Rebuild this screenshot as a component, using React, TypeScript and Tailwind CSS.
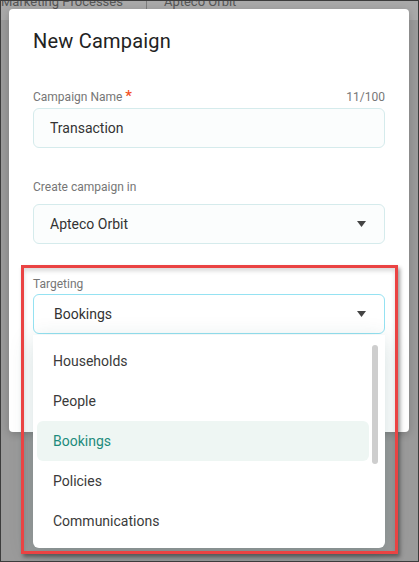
import React from 'react';

const targets = ['Households', 'People', 'Bookings', 'Policies', 'Communications'];

function Caret() {
    return (
        <svg width="9" height="6" viewBox="0 0 9 6" className="shrink-0">
            <path d="M0 0 L9 0 L4.5 6 Z" fill="#444" />
        </svg>
    );
}

function Field({ label, children, gap, extra }: { label: React.ReactNode; children: React.ReactNode; gap: string; extra?: React.ReactNode }) {
    return (
        <div>
            <div className={`flex items-center justify-between text-[12px] leading-4 text-[#767676] ${gap}`}>
                <span>{label}</span>
                {extra}
            </div>
            {children}
        </div>
    );
}

export default function App() {
    const selected = 'Bookings';

    return (
        <div className="relative w-[419px] h-[562px] overflow-hidden bg-[#9a9a9a] font-['Roboto',sans-serif]">
            {/* app header behind the modal */}
            <div className="h-[20px] bg-[#a9a9a9] flex items-start text-[13px] text-[#555] leading-none">
                <span className="-mt-[5px] ml-[1px]">Marketing Processes</span>
                <span className="ml-[23px] w-px h-[9px] bg-[#7d7d7d]" />
                <span className="-mt-[5px] ml-[17px]">Apteco Orbit</span>
            </div>

            {/* modal */}
            <div className="absolute left-[9px] top-[9px] w-[400px] h-[423px] rounded bg-white px-6 pt-[18px] shadow-[0_2px_8px_rgba(0,0,0,0.2)]">
                <h1 className="text-[20px] leading-7 text-[#222] tracking-[0.2px]">New Campaign</h1>

                <div className="mt-[34px]">
                    <Field
                        gap="mb-[3px]"
                        label={<>Campaign Name <span className="text-[#f4511e] text-[15px] font-medium leading-none">*</span></>}
                        extra={<span className="text-[#777]">11/100</span>}
                    >
                        <div className="h-[40px] rounded-md border border-[#d5ebec] bg-[#fbfdfd] flex items-center px-4 text-[14px] text-[#333]">
                            Transaction
                        </div>
                    </Field>
                </div>

                <div className="mt-[31px]">
                    <Field gap="mb-[9px]" label="Create campaign in">
                        <div className="h-[40px] rounded-md border border-[#d5ebec] bg-[#fbfdfd] flex items-center justify-between pl-4 pr-[18px] text-[14px] text-[#333]">
                            <span>Apteco Orbit</span>
                            <Caret />
                        </div>
                    </Field>
                </div>

                <div className="mt-[32px]">
                    <Field gap="mb-[2px]" label="Targeting">
                        <div className="h-[40px] rounded-md border border-[#95e2f2] bg-white flex items-center justify-between pl-5 pr-[18px] text-[14px] text-[#333]">
                            <span>{selected}</span>
                            <Caret />
                        </div>
                    </Field>
                </div>
            </div>

            {/* open select menu */}
            <div className="absolute left-[33px] top-[335px] w-[352px] h-[213px] rounded-b-md bg-white pt-[6px] pl-[4px] pr-[16px] shadow-[0_6px_24px_rgba(0,80,80,0.18)]">
                {targets.map(t => (
                    <div
                        key={t}
                        className={`h-[40px] rounded-md flex items-center pl-4 text-[14px] ${t === selected ? 'bg-[#eef6f3] text-[#1d8b7c]' : 'text-[#3a3a3a]'}`}
                    >
                        {t}
                    </div>
                ))}
                <div className="absolute left-[339px] top-[10px] w-[6px] h-[119px] rounded-full bg-[#cecece]" />
            </div>

            {/* highlight frame */}
            <div className="absolute left-[21px] top-[265px] w-[377px] h-[289px] border-[3px] border-[#ea4343] shadow-[2px_3px_4px_rgba(0,0,0,0.4),inset_0_3px_4px_rgba(0,0,0,0.15)] pointer-events-none" />

            <div className="absolute inset-0 border border-[#3c3c3c] pointer-events-none" />
        </div>
    );
}
